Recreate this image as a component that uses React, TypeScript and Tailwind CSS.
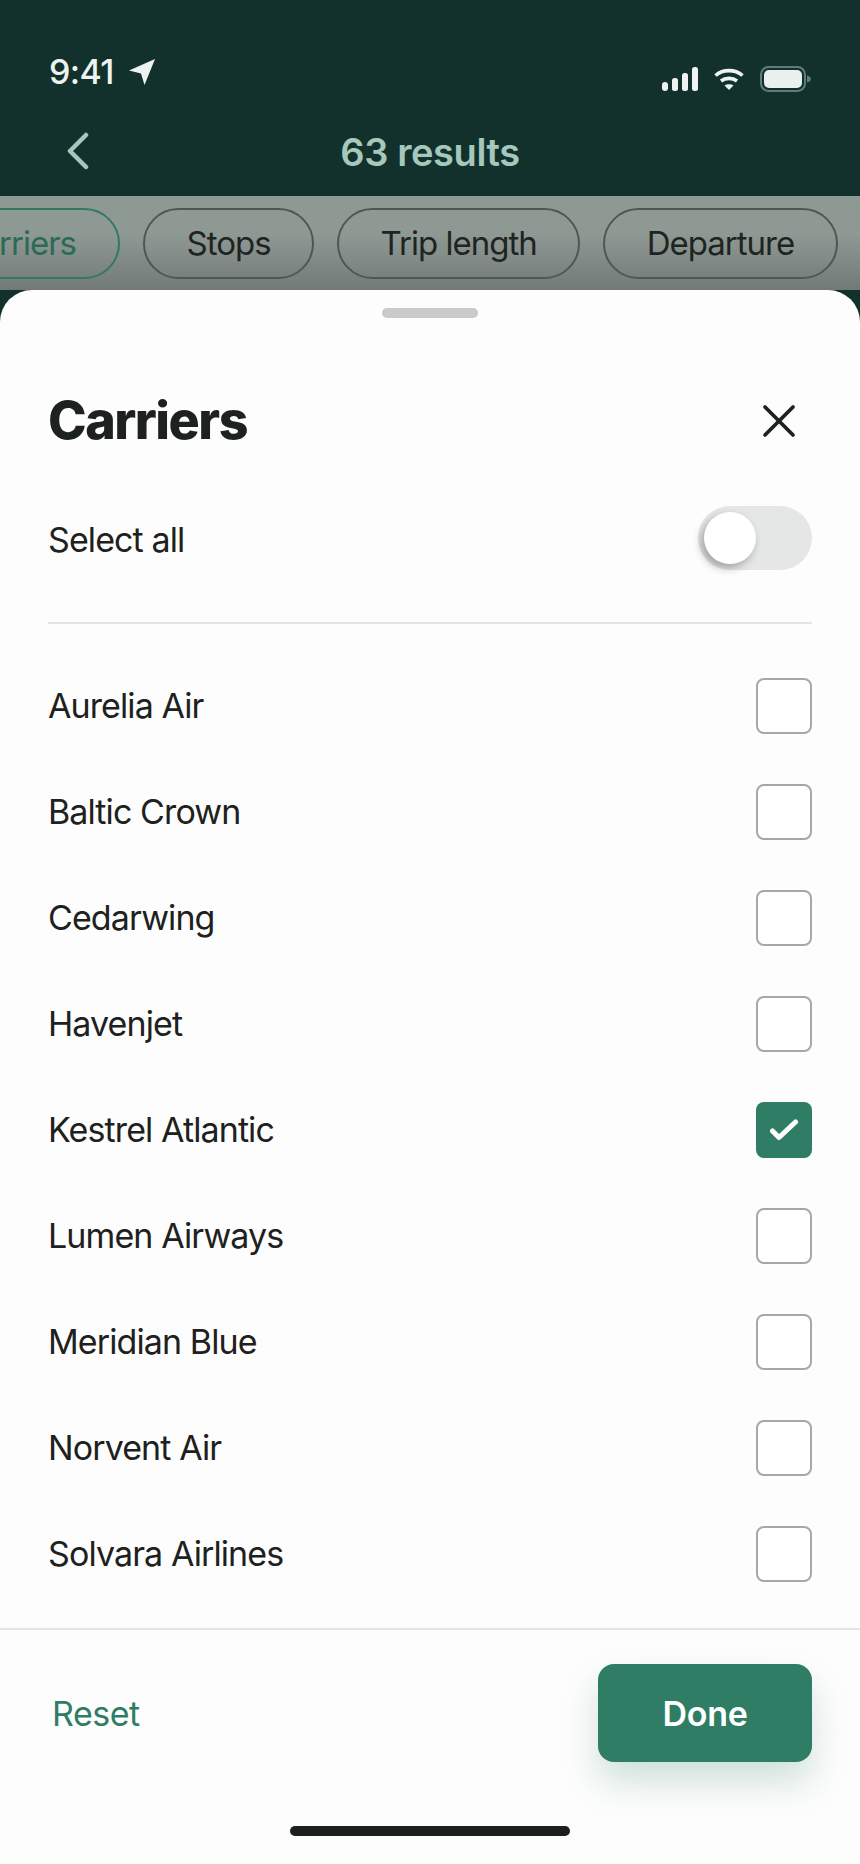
import { X } from "lucide-react";

const carriers = [
  { name: "Aurelia Air" },
  { name: "Baltic Crown" },
  { name: "Cedarwing" },
  { name: "Havenjet" },
  { name: "Kestrel Atlantic", checked: true },
  { name: "Lumen Airways" },
  { name: "Meridian Blue" },
  { name: "Norvent Air" },
  { name: "Solvara Airlines" },
];

function StatusIcons() {
  return (
    <div className="flex items-center gap-[16px]">
      <svg width="36" height="24" viewBox="0 0 36 24" fill="#eef3f1">
        <rect x="0" y="15" width="6" height="9" rx="3" />
        <rect x="10" y="11" width="6" height="13" rx="2.5" />
        <rect x="20" y="6" width="6" height="18" rx="2.5" />
        <rect x="30" y="0" width="6" height="24" rx="2.5" />
      </svg>
      <svg width="30" height="22" viewBox="0 0 30 22" fill="none" stroke="#eef3f1" strokeWidth="3.6">
        <path d="M1.500 7.500C9 1 21 1 28.500 7.500" />
        <path d="M7 13C11.500 9.500 18.500 9.500 23 13" />
        <path d="M15 22L10.500 17.500C13 15.800 17 15.800 19.500 17.500Z" fill="#eef3f1" stroke="none" />
      </svg>
      <svg width="51" height="26" viewBox="0 0 51 26" fill="none">
        <rect x="1" y="1" width="44" height="24" rx="7.500" stroke="#5f7d75" strokeWidth="2" />
        <rect x="4" y="4" width="38" height="18" rx="5" fill="#eaf0ee" />
        <path d="M47 9.500C49.500 10 51 11.500 51 13C51 14.500 49.500 16 47 16.500Z" fill="#5f7d75" />
      </svg>
    </div>
  );
}

function Chip({ label, active }: { label: string; active?: boolean }) {
  return (
    <div
      className={
        active
          ? "flex h-[71px] w-[170px] shrink-0 items-center justify-end rounded-[36px] border-2 border-[#2f7a63] pr-[42px] text-[33px] tracking-[-1px] text-[#2a6b57]"
          : "flex h-[71px] shrink-0 items-center justify-center rounded-[36px] border-2 border-[#4f5755] px-[41.5px] text-[33px] tracking-[-1px] text-[#1e2422]"
      }
    >
      {label}
    </div>
  );
}

function Row({ name, checked }: { name: string; checked?: boolean }) {
  return (
    <div className="flex h-[106px] items-center justify-between">
      <span className="pb-[2px] text-[34px] tracking-[-0.9px] text-[#1d2120]">{name}</span>
      {checked ? (
        <div className="flex h-[56px] w-[56px] items-center justify-center rounded-[8px] bg-[#2e7d64]">
          <svg width="30" height="24" viewBox="0 0 30 24" fill="none" stroke="#fff" strokeWidth="5" strokeLinecap="round" strokeLinejoin="round">
            <path d="M3.500 13L10 19.500L26.500 4" />
          </svg>
        </div>
      ) : (
        <div className="h-[56px] w-[56px] rounded-[8px] border-2 border-[#a6a8a7] bg-white" />
      )}
    </div>
  );
}

export default function App() {
  return (
    <div className="flex h-[1864px] w-[860px] flex-col overflow-hidden bg-[#12312c] font-[Inter,sans-serif]">
      <header className="h-[196px] shrink-0">
        <div className="flex h-[130px] items-start justify-between pl-[49px] pr-[49px]">
          <div className="flex items-center gap-[14px] pt-[50px]">
            <span className="text-[34px] font-medium leading-[44px] tracking-[-0.6px] text-[#eef3f1]">9:41</span>
            <svg width="28" height="28" viewBox="0 0 28 28" fill="#eef3f1">
              <path d="M27 1L1 12.500L13 15.500L16.500 27Z" />
            </svg>
          </div>
          <div className="pt-[66px]">
            <StatusIcons />
          </div>
        </div>
        <div className="relative flex h-[66px] items-start justify-center">
          <svg className="absolute left-[66px] top-[2px]" width="24" height="38" viewBox="0 0 24 38" fill="none" stroke="#a6c8bc" strokeWidth="4.500" strokeLinecap="round" strokeLinejoin="round">
            <path d="M20 3L4 19L20 35" />
          </svg>
          <span className="text-[38px] font-semibold leading-[44px] tracking-[-0.4px] text-[#a6c8bc]">63 results</span>
        </div>
      </header>

      <div className="flex h-[94px] shrink-0 items-start gap-[23px] overflow-hidden bg-gradient-to-b from-[#8f9994] from-40% to-[#727a77] pt-[12px]">
        <div className="-ml-[50px]">
          <Chip label="Carriers" active />
        </div>
        <Chip label="Stops" />
        <Chip label="Trip length" />
        <Chip label="Departure" />
      </div>

      <main className="flex min-h-0 flex-1 flex-col rounded-t-[32px] bg-[#fdfdfd]">
        <div className="mx-auto mt-[18px] h-[10px] w-[96px] shrink-0 rounded-full bg-[#c9caca]" />

        <div className="px-[48px]">
          <div className="mt-[57px] flex h-[92px] items-center justify-between">
            <h1 className="text-[52px] font-extrabold tracking-[-1.5px] text-[#1d2120]">Carriers</h1>
            <X className="mr-[5px] text-[#1d2120]" size={56} strokeWidth={1.6} />
          </div>

          <div className="mt-[19px] flex h-[104px] items-center justify-between">
            <span className="pt-[2px] text-[34px] tracking-[-0.9px] text-[#1d2120]">Select all</span>
            <div className="relative h-[64px] w-[114px] rounded-full bg-[#e5e7e6]">
              <div className="absolute left-[6px] top-[6px] h-[52px] w-[52px] rounded-full bg-white shadow-[-3px_4px_8px_rgba(0,0,0,0.3)]" />
            </div>
          </div>

          <div className="mt-[32px] h-[2px] bg-[#e3e4e4]" />

          <div className="mt-[29px]">
            {carriers.map((c) => (
              <Row key={c.name} name={c.name} checked={c.checked} />
            ))}
          </div>
        </div>

        <footer className="mt-[21px] border-t-2 border-[#e3e4e4]">
          <div className="flex items-center justify-between pl-[52px] pr-[48px] pt-[34px]">
            <span className="text-[34px] tracking-[-0.5px] text-[#2e7d64]">Reset</span>
            <div className="flex h-[98px] w-[214px] items-center justify-center rounded-[16px] bg-[#2e7d64] text-[34px] font-semibold tracking-[-0.3px] text-white shadow-[0_20px_36px_rgba(46,125,100,0.22)]">
              Done
            </div>
          </div>
          <div className="mx-auto mt-[64px] h-[10px] w-[280px] rounded-full bg-[#1b1f1e]" />
        </footer>
      </main>
    </div>
  );
}
